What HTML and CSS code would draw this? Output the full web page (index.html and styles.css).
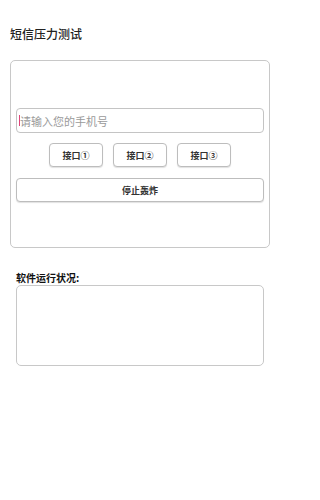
FILE: index.html
```html
<!DOCTYPE html>
<html lang="zh">
<head>
<meta charset="utf-8">
<meta name="viewport" content="width=280">
<link rel="stylesheet" href="styles.css">
</head>
<body>
<div class="page">
<h1 class="title">短信压力测试</h1>
<div class="card">
  <div class="input"><span class="caret"></span><span class="placeholder">请输入您的手机号</span></div>
  <div class="btn-row">
    <div class="btn">接口①</div>
    <div class="btn">接口②</div>
    <div class="btn">接口③</div>
  </div>
  <div class="btn stop">停止轰炸</div>
</div>
<div class="status-label">软件运行状况:</div>
<div class="log"></div>
</div>
</body>
</html>
```
FILE: styles.css
```css
html, body {
  margin: 0;
  padding: 0;
  background: #ffffff;
  font-family: "Noto Sans CJK SC", "Noto Sans", sans-serif;
}
.page {
  width: 280px;
}
.title {
  margin: 0;
  padding: 26px 10px 0;
  font-size: 12px;
  line-height: 16px;
  font-weight: 500;
  color: #222222;
}
.card {
  margin: 18px 10px 0;
  height: 188px;
  box-sizing: border-box;
  border: 1px solid #c8c8c8;
  border-radius: 5px;
  padding: 47px 5px 0;
}
.input {
  height: 25px;
  box-sizing: border-box;
  border: 1px solid #c4c4c4;
  border-radius: 4px;
  display: flex;
  align-items: center;
  padding-left: 2px;
  font-size: 11px;
  color: #9a9a9a;
}
.caret {
  width: 1px;
  height: 11px;
  background: #e0457a;
}
.btn-row {
  margin-top: 10px;
  display: flex;
  justify-content: center;
  gap: 10px;
}
.btn {
  width: 54px;
  height: 24px;
  box-sizing: border-box;
  border: 1px solid #bdbdbd;
  border-radius: 4px;
  box-shadow: 0 1px 1px rgba(0, 0, 0, 0.12);
  display: flex;
  align-items: center;
  justify-content: center;
  font-size: 9px;
  font-weight: 700;
  color: #333333;
  background: #ffffff;
}
.stop {
  width: auto;
  margin-top: 11px;
}
.status-label {
  margin: 24px 16px 0;
  font-size: 10px;
  line-height: 12px;
  font-weight: 700;
  color: #111111;
}
.log {
  margin: 1px 16px 0;
  height: 81px;
  box-sizing: border-box;
  border: 1px solid #c8c8c8;
  border-radius: 5px;
}
```
